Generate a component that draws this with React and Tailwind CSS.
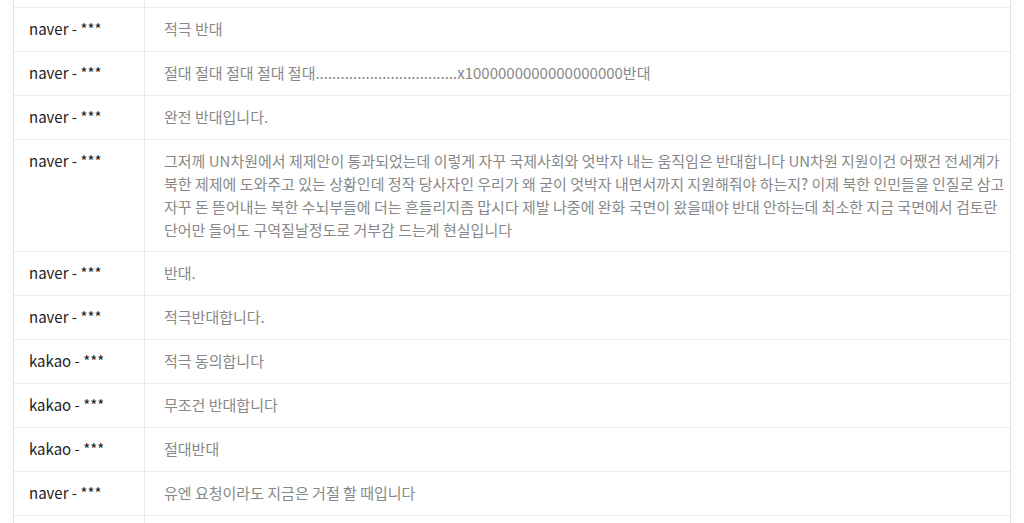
const rows = [
  { user: "", lines: [""] },
  { user: "naver - ***", lines: ["적극 반대"] },
  {
    user: "naver - ***",
    lines: ["절대 절대 절대 절대 절대..................................x1000000000000000000반대"],
  },
  { user: "naver - ***", lines: ["완전 반대입니다."] },
  {
    user: "naver - ***",
    lines: [
      "그저께 UN차원에서 제제안이 통과되었는데 이렇게 자꾸 국제사회와 엇박자 내는 움직임은 반대합니다 UN차원 지원이건 어쨌건 전세계가",
      "북한 제제에 도와주고 있는 상황인데 정작 당사자인 우리가 왜 굳이 엇박자 내면서까지 지원해줘야 하는지? 이제 북한 인민들을 인질로 삼고",
      "자꾸 돈 뜯어내는 북한 수뇌부들에 더는 흔들리지좀 맙시다 제발 나중에 완화 국면이 왔을때야 반대 안하는데 최소한 지금 국면에서 검토란",
      "단어만 들어도 구역질날정도로 거부감 드는게 현실입니다",
    ],
  },
  { user: "naver - ***", lines: ["반대."] },
  { user: "naver - ***", lines: ["적극반대합니다."] },
  { user: "kakao - ***", lines: ["적극 동의합니다"] },
  { user: "kakao - ***", lines: ["무조건 반대합니다"] },
  { user: "kakao - ***", lines: ["절대반대"] },
  { user: "naver - ***", lines: ["유엔 요청이라도 지금은 거절 할 때입니다"] },
  { user: "", lines: [""] },
];

function Row({ user, lines }) {
  return (
    <div className="flex min-h-[44px] border-b border-[#ececec]">
      <div className="w-[130px] shrink-0 pl-[15px] pt-[9px] pb-[10px] text-[#222]">
        {user}
      </div>
      <div className="flex-1 border-l border-[#ececec] pl-[19px] pt-[9px] pb-[10px] text-[#888]">
        {lines.map((l, i) => (
          <div key={i} className="whitespace-nowrap">
            {l}
          </div>
        ))}
      </div>
    </div>
  );
}

export default function App() {
  return (
    <div className="h-[523px] overflow-hidden bg-white font-['Noto_Sans_CJK_KR','Noto_Sans',sans-serif] text-[15px] leading-[23px]">
      <div className="mx-[13px] -mt-[36px] border-x border-[#e2e2e2]">
        {rows.map((r, i) => (
          <Row key={i} {...r} />
        ))}
      </div>
    </div>
  );
}
